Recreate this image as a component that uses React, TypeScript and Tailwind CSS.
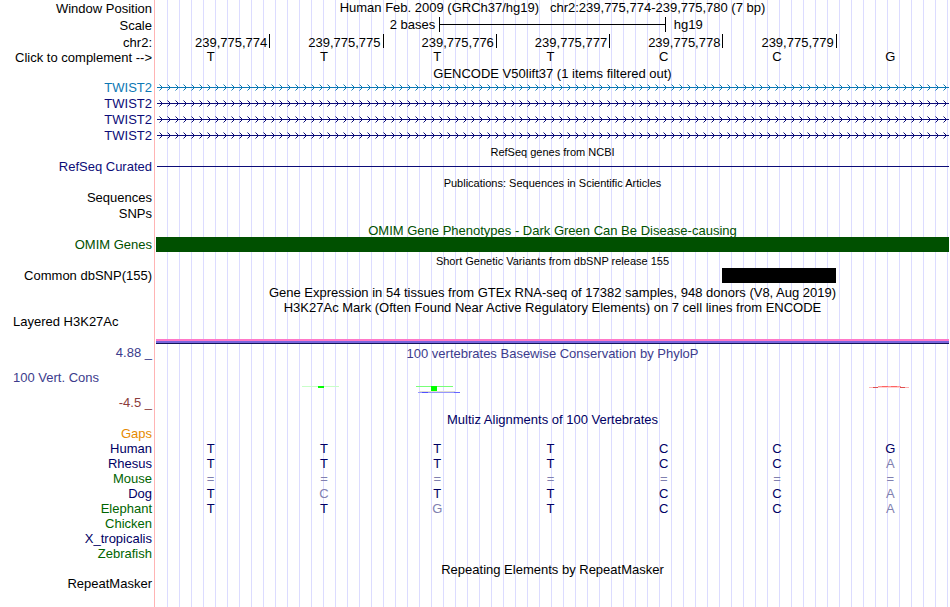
import React, { useId } from 'react';
import clsx from 'clsx';

type Cell = { base: string; dim?: boolean };

const POSITIONS = ['239,775,774', '239,775,775', '239,775,776', '239,775,777', '239,775,778', '239,775,779', ''];
const BASES = ['T', 'T', 'T', 'T', 'C', 'C', 'G'];

const TRANSCRIPTS = [
  { name: 'TWIST2', text: 'text-[#0c78b4]', stroke: '#0c78b4' },
  { name: 'TWIST2', text: 'text-[#0c0c78]', stroke: '#0c0c78' },
  { name: 'TWIST2', text: 'text-[#0c0c78]', stroke: '#0c0c78' },
  { name: 'TWIST2', text: 'text-[#0c0c78]', stroke: '#0c0c78' }
];

// lower case marks a base that differs from the human one
const SPECIES = [
  { name: 'Gaps', color: 'text-[#e68a00]', seq: '' },
  { name: 'Human', color: 'text-[#000064]', seq: 'TTTTCCG' },
  { name: 'Rhesus', color: 'text-[#000064]', seq: 'TTTTCCa' },
  { name: 'Mouse', color: 'text-[#006400]', seq: '=======' },
  { name: 'Dog', color: 'text-[#000064]', seq: 'TcTTCCa' },
  { name: 'Elephant', color: 'text-[#006400]', seq: 'TTgTCCa' },
  { name: 'Chicken', color: 'text-[#006400]', seq: '' },
  { name: 'X_tropicalis', color: 'text-[#000064]', seq: '' },
  { name: 'Zebrafish', color: 'text-[#006400]', seq: '' }
];

function parseSeq(seq: string): Cell[] {
  return seq.split('').map((c) => ({
    base: c.toUpperCase(),
    dim: c === '=' || c !== c.toUpperCase()
  }));
}

type RowProps = {
  label?: React.ReactNode;
  labelClass?: string;
  className?: string;
  children?: React.ReactNode;
};

function Row({ label, labelClass, className, children }: RowProps) {
  return (
    <div className={clsx('flex', className)}>
      <div className={clsx('w-[152px] shrink-0 whitespace-nowrap text-right', labelClass)}>{label}</div>
      <div className="ml-1 mr-px min-w-0 grow">{children}</div>
    </div>
  );
}

function TrackTitle({ className, children }: { className?: string; children: React.ReactNode }) {
  return (
    <Row className={className}>
      <h2 className="whitespace-pre text-center">{children}</h2>
    </Row>
  );
}

function BaseRow({ cells, className }: { cells: Cell[]; className?: string }) {
  return (
    <div className={clsx('grid grid-cols-7 text-center', className)}>
      {cells.map((cell, i) => (
        <span key={i} className={clsx('pr-1', cell.dim && 'text-[#8080b0]')}>{cell.base}</span>
      ))}
    </div>
  );
}

function IntronLine({ color }: { color: string }) {
  const id = useId();
  return (
    <div className="pl-px">
      <svg className="block h-4 w-full" shapeRendering="crispEdges" aria-hidden="true">
        <defs>
          <pattern id={id} width="8" height="16" patternUnits="userSpaceOnUse">
            <path d="M3 5h1v1h-1zM4 6h1v1h-1zM4 8h1v1h-1zM3 9h1v1h-1z" fill={color} />
            <path d="M2 4h1v1h-1zM2 10h1v1h-1z" fill={color} opacity="0.5" />
          </pattern>
        </defs>
        <rect y="7" width="100%" height="1" fill={color} />
        <rect width="100%" height="16" fill={`url(#${id})`} />
      </svg>
    </div>
  );
}

function ConservationPlot() {
  return (
    <div className="grid grid-cols-7">
      <svg className="col-start-2 h-6 w-full" shapeRendering="crispEdges" aria-hidden="true">
        <rect x="33" y="11" width="37" height="1" fill="#c8ffc8" />
        <rect x="49" y="11" width="6" height="2" fill="#00ff00" />
      </svg>
      <svg className="h-6 w-full" shapeRendering="crispEdges" aria-hidden="true">
        <rect x="33" y="11" width="37" height="1" fill="#78ff78" />
        <rect x="48" y="11" width="6" height="5" fill="#00ff00" />
        <rect x="36" y="16" width="36" height="1" fill="#e0e0d0" />
        <rect x="35" y="17" width="42" height="1" fill="#9696ff" />
        <rect x="39" y="17" width="6" height="1" fill="#5050ff" />
        <rect x="71" y="17" width="6" height="1" fill="#6464ff" />
      </svg>
      <svg className="col-start-7 h-6 w-full" shapeRendering="crispEdges" aria-hidden="true">
        <rect x="42" y="11" width="23" height="1" fill="#ff9696" />
        <rect x="46" y="11" width="6" height="1" fill="#ff6464" />
        <rect x="55" y="11" width="6" height="1" fill="#ff6464" />
        <rect x="42" y="12" width="23" height="1" fill="#ffd2d2" />
        <rect x="33" y="12" width="4" height="1" fill="#ffb4b4" />
        <rect x="37" y="12" width="5" height="1" fill="#dc5050" />
        <rect x="64" y="12" width="5" height="1" fill="#dc5050" />
        <rect x="69" y="12" width="4" height="1" fill="#ffb4b4" />
      </svg>
    </div>
  );
}

function App() {
  return (
    <main className="relative min-h-screen bg-white font-['Liberation_Sans',Arial,sans-serif] text-[13px] leading-[15px] text-black">
      <div className="absolute inset-y-0 left-[154px] right-px flex" aria-hidden="true">
        <div className="mr-px w-px bg-[#ffb4b4]" />
        <div className="grow bg-[repeating-linear-gradient(to_right,transparent_0_11px,#dcdcff_11px_12px)]" />
      </div>

      <div className="relative">
        <Row label="Window Position" labelClass="leading-[17px]" className="h-[17px]">
          <h1 className="whitespace-pre text-center">Human Feb. 2009 (GRCh37/hg19)   chr2:239,775,774-239,775,780 (7 bp)</h1>
        </Row>
        <Row label="Scale" labelClass="leading-[17px]" className="h-[17px]">
          <div className="grid grid-cols-14">
            <span className="col-span-5 pr-1 text-right">2 bases</span>
            <div className="col-span-4 flex h-[15px] items-center border-x border-black">
              <div className="h-px grow bg-black" />
            </div>
            <span className="col-span-5 pl-2">hg19</span>
          </div>
        </Row>
        <Row label="chr2:" labelClass="leading-[17px]" className="h-[15px]">
          <div className="grid h-[14px] grid-cols-7 text-right leading-[17px]">
            {POSITIONS.map((pos, i) => (
              <span key={i} className={clsx('h-[14px] pr-0.5', i > 0 && 'border-l border-black')}>{pos}</span>
            ))}
          </div>
        </Row>
        <Row label="Click to complement -->" labelClass="leading-[17px]" className="h-[17px]">
          <BaseRow cells={BASES.map((base) => ({ base }))} />
        </Row>

        <TrackTitle className="h-[14px]">GENCODE V50lift37 (1 items filtered out)</TrackTitle>
        {TRANSCRIPTS.map((t, i) => (
          <Row key={i} label={t.name} labelClass={t.text} className="h-4">
            <IntronLine color={t.stroke} />
          </Row>
        ))}

        <TrackTitle className="h-[15px] text-[11px] leading-4">RefSeq genes from NCBI</TrackTitle>
        <Row label="RefSeq Curated" labelClass="text-[#0c0c78]" className="h-4">
          <div className="ml-px mt-[7px] h-px bg-[#0c0c78]" />
        </Row>

        <TrackTitle className="h-[15px] text-[11px] leading-4">Publications: Sequences in Scientific Articles</TrackTitle>
        <Row label="Sequences" className="h-4" />
        <Row label="SNPs" className="h-4" />

        <TrackTitle className="h-[15px] leading-[17px] text-[#005000]">
          OMIM Gene Phenotypes - Dark Green Can Be Disease-causing
        </TrackTitle>
        <Row label="OMIM Genes" labelClass="text-[#005000]" className="h-[15px]">
          <div className="h-[15px] bg-[#005000]" />
        </Row>

        <TrackTitle className="h-4 text-[11px] leading-[19px]">Short Genetic Variants from dbSNP release 155</TrackTitle>
        <Row label="Common dbSNP(155)" className="h-[15px]">
          <div className="grid grid-cols-7">
            <div className="col-start-6 h-[15px] bg-black" />
          </div>
        </Row>

        <TrackTitle className="h-[17px] leading-[19px]">
          Gene Expression in 54 tissues from GTEx RNA-seq of 17382 samples, 948 donors (V8, Aug 2019)
        </TrackTitle>
        <TrackTitle className="h-[14px]">
          H3K27Ac Mark (Often Found Near Active Regulatory Elements) on 7 cell lines from ENCODE
        </TrackTitle>
        <Row label="Layered H3K27Ac" labelClass="pl-[13px] !text-left" className="h-[31px]">
          <div className="mt-[25px] h-[5px] border-b border-t-2 border-b-[#14145a] border-t-[#ff78c8] bg-[#7864dc]" />
        </Row>

        <Row
          className="h-[67px]"
          labelClass="text-[#3c3c8c]"
          label={
            <div className="flex h-[65px] flex-col justify-between">
              <span>4.88 _</span>
              <span className="pl-[13px] text-left">100 Vert. Cons</span>
              <span className="text-[#8c3c3c]">-4.5 _</span>
            </div>
          }
        >
          <h2 className="pb-[13px] text-center leading-[17px] text-[#3c3c8c]">100 vertebrates Basewise Conservation by PhyloP</h2>
          <ConservationPlot />
        </Row>

        <TrackTitle className="h-[14px] text-[#000064]">Multiz Alignments of 100 Vertebrates</TrackTitle>
        {SPECIES.map((s) => (
          <Row key={s.name} label={s.name} labelClass={s.color} className="h-[15px]">
            <BaseRow cells={parseSeq(s.seq)} className="text-[#000064]" />
          </Row>
        ))}

        <TrackTitle className="h-[15px] leading-[17px]">Repeating Elements by RepeatMasker</TrackTitle>
        <Row label="RepeatMasker" />
      </div>
    </main>
  );
}

export default App;
